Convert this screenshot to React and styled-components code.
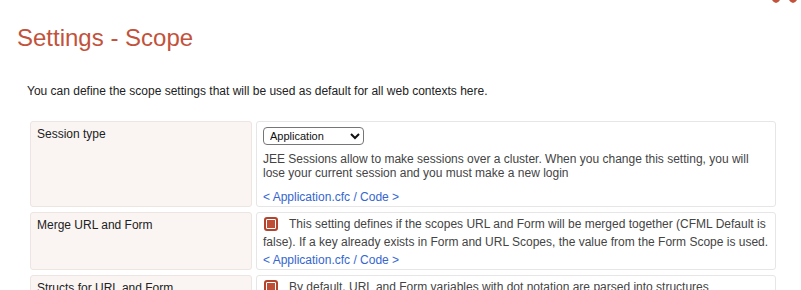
import React from "react";
import styled, { createGlobalStyle } from "styled-components";

const GlobalStyle = createGlobalStyle`
  body {
    margin: 0;
    background: #fff;
    font-family: "Liberation Sans", Arial, sans-serif;
    color: #222;
  }
`;

const Page = styled.div`
  width: 801px;
  height: 290px;
  overflow: hidden;
  box-sizing: border-box;
  padding: 0 25px 0 17px;
`;

const TopBar = styled.div`
  display: flex;
  justify-content: flex-end;
  height: 3px;
  margin-right: -25px;
`;

const Title = styled.h1`
  margin: 21px 0 0 0;
  font-size: 24px;
  line-height: 28px;
  font-weight: normal;
  color: #c2523b;
`;

const Intro = styled.p`
  margin: 32px 0 0 10px;
  font-size: 12px;
  line-height: 14px;
  color: #222;
`;

const Settings = styled.div`
  display: grid;
  grid-template-columns: 222px 1fr;
  gap: 5px 4px;
  margin: 23px 0 0 13px;
`;

const Label = styled.div`
  background: #faf5f3;
  border: 1px solid #ece5e1;
  border-radius: 3px;
  padding: 5px 6px;
  font-size: 12px;
  line-height: 14px;
  color: #222;
`;

const Value = styled.div`
  border: 1px solid #e6e6e6;
  border-radius: 3px;
  padding: ${(p) => (p.$compact ? "2px 6px 0" : "5px 6px 2px")};
  font-size: 12px;
  color: #444;
`;

const Select = styled.select`
  display: block;
  width: 101px;
  height: 18px;
  padding: 0 2px;
  font-family: "Liberation Sans", Arial, sans-serif;
  font-size: 11px;
  color: #111;
  background: #fff;
  border: 1px solid #767676;
  border-radius: 4px;
`;

const Desc = styled.div`
  margin-top: ${(p) => p.$top || 0}px;
  line-height: ${(p) => p.$lh || 14}px;
  max-width: 492px;
`;

const CheckLine = styled.div`
  line-height: 18px;
`;

const Check = styled.span`
  display: inline-block;
  vertical-align: -3px;
  width: 14px;
  height: 14px;
  box-sizing: border-box;
  border: 2px solid #b2432c;
  border-radius: 3px;
  background: #bf4e37;
  box-shadow: inset 0 0 0 1px #fff;
  margin: 0 11px 0 1px;
`;

const CodeLink = styled.a`
  display: block;
  margin-top: ${(p) => p.$top || 0}px;
  line-height: ${(p) => p.$lh || 14}px;
  color: #3566cf;
  text-decoration: none;
`;

const Logo = () => (
  <svg width="30" height="3" viewBox="0 0 30 3">
    <path d="M1 0 H9 Q7 3 5 3 Q3 3 1 0 Z" fill="#c2523b" />
    <path d="M18 0 H26 Q24 3 22 3 Q20 3 18 0 Z" fill="#c2523b" />
  </svg>
);

export default function App() {
  return (
    <>
      <GlobalStyle />
      <Page>
        <TopBar>
          <Logo />
        </TopBar>
        <Title>Settings - Scope</Title>
        <Intro>
          You can define the scope settings that will be used as default for all web contexts here.
        </Intro>
        <Settings>
          <Label>Session type</Label>
          <Value>
            <Select defaultValue="application">
              <option value="application">Application</option>
              <option value="jee">JEE</option>
            </Select>
            <Desc $top={7}>
              JEE Sessions allow to make sessions over a cluster. When you change this setting, you will
              lose your current session and you must make a new login
            </Desc>
            <CodeLink href="#" $top={10}>
              &lt; Application.cfc / Code &gt;
            </CodeLink>
          </Value>

          <Label>Merge URL and Form</Label>
          <Value $compact>
            <CheckLine>
              <Check />
              This setting defines if the scopes URL and Form will be merged together (CFML Default is
              false). If a key already exists in Form and URL Scopes, the value from the Form Scope is used.
            </CheckLine>
            <CodeLink href="#" $lh={18}>
              &lt; Application.cfc / Code &gt;
            </CodeLink>
          </Value>

          <Label>Structs for URL and Form</Label>
          <Value $compact>
            <CheckLine>
              <Check />
              By default, URL and Form variables with dot notation are parsed into structures
            </CheckLine>
            <CodeLink href="#" $lh={18}>
              &lt; Application.cfc / Code &gt;
            </CodeLink>
          </Value>
        </Settings>
      </Page>
    </>
  );
}
